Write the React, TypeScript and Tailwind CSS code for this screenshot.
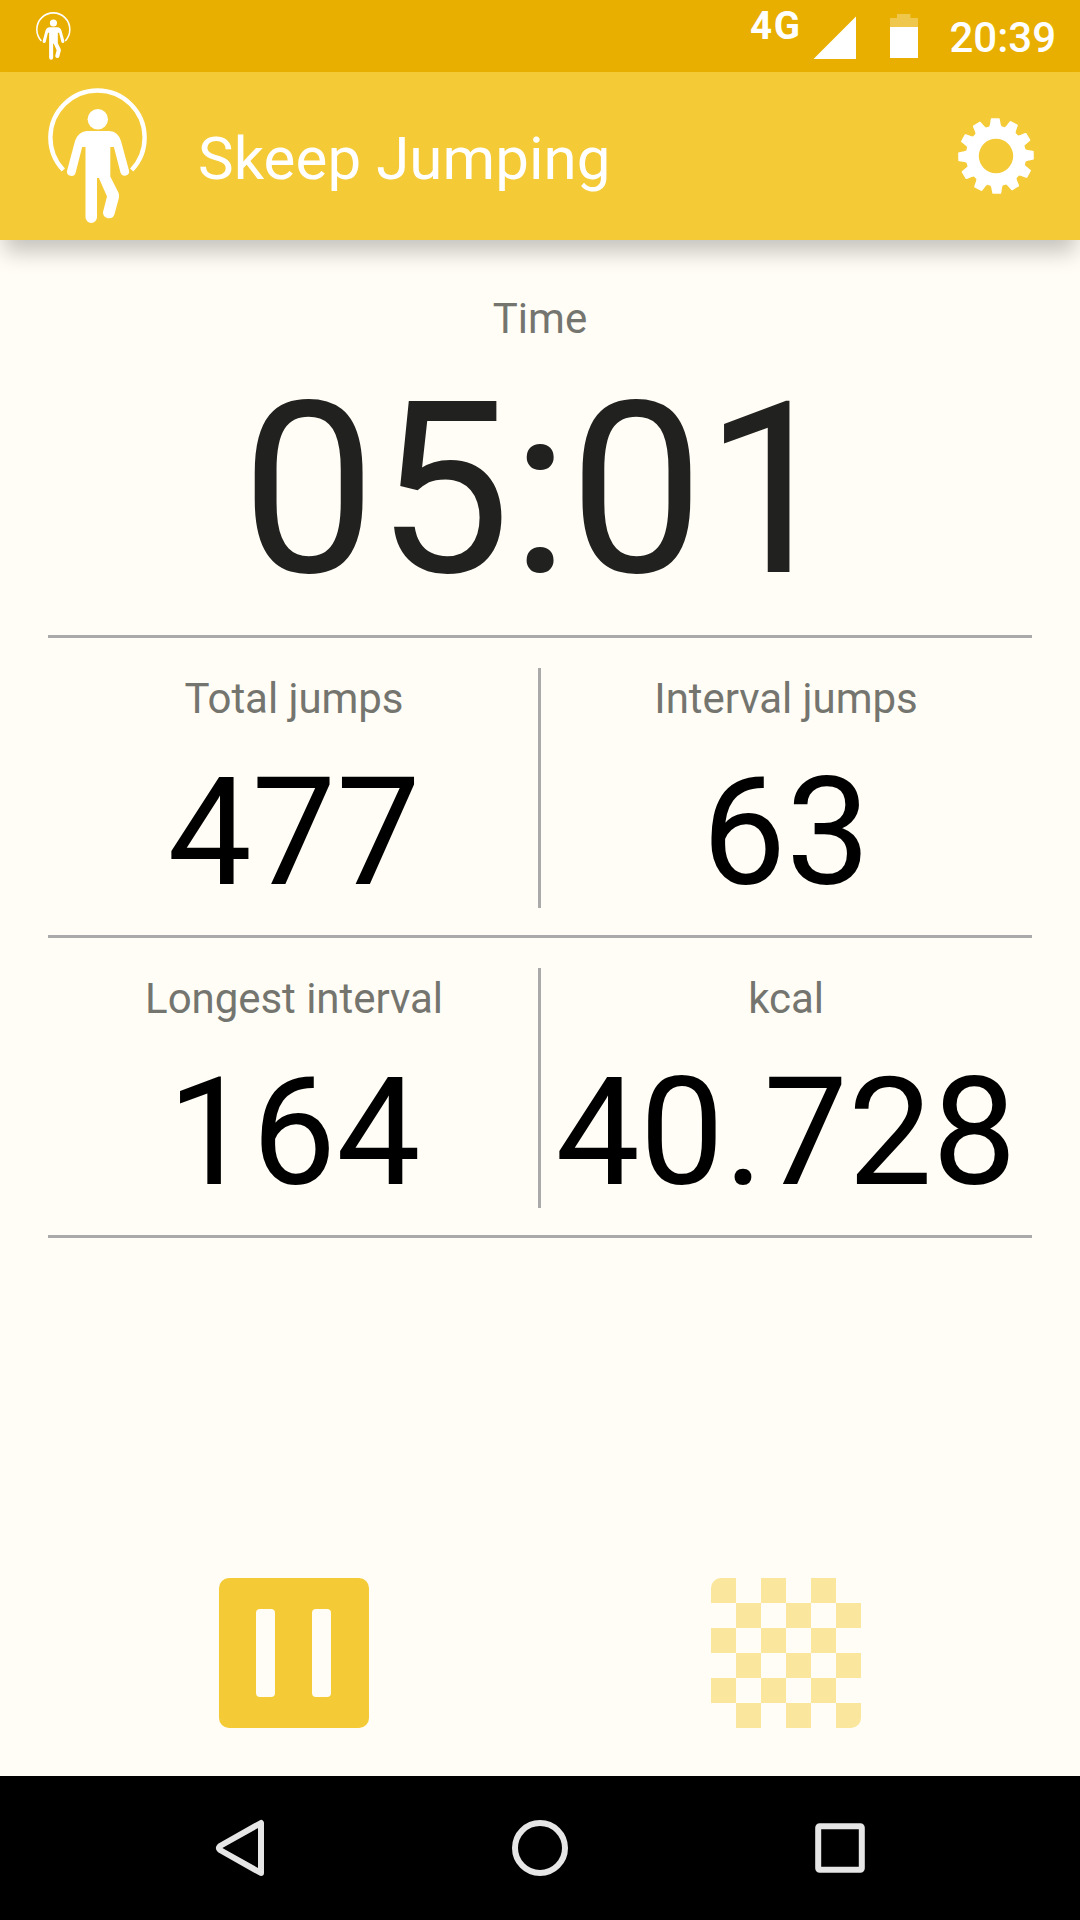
import React from "react";

function JumperIcon({ className }: { className: string }) {
  return (
    <svg className={className} viewBox="48 88 100 136" preserveAspectRatio="none" fill="#fff">
      <path
        d="M63.3 170 A47.1 47.1 0 1 1 131.7 170"
        fill="none"
        stroke="#fff"
        strokeWidth="4.4"
      />
      <circle cx="97.8" cy="119.2" r="10.2" />
      <path d="M86.5 131 H109.5 Q118 131.5 121 141 L129 170.5 A4.4 4.4 0 0 1 120.6 173 L113.9 147 H110.3 V176.5 L118.4 192.5 Q119.6 195 118.9 198 L114.4 214.5 A5.9 5.9 0 0 1 103 212 L107 196.5 L98.9 178 H97 V217.3 A5.7 5.7 0 0 1 85.5 217.3 V147 H82.2 L75.6 172.7 A4.4 4.4 0 0 1 67 171 L75 141 Q78 132 86.5 131 Z" />
    </svg>
  );
}

const TEETH = 12;
const toothOutline = [
  [-11.6, 30.2],
  [-9.6, 32.2],
  [-7.1, 37],
  [-6.2, 38],
  [6.2, 38],
  [7.1, 37],
  [9.6, 32.2],
  [11.6, 30.2],
];
const gearPath =
  "M" +
  Array.from({ length: TEETH }, (_, i) =>
    toothOutline
      .map(([deg, r]) => {
        const a = ((i * 360) / TEETH - 1.2 + deg) * (Math.PI / 180);
        return `${(r * Math.sin(a)).toFixed(2)} ${(-r * Math.cos(a)).toFixed(2)}`;
      })
      .join("L"),
  ).join("L") +
  "ZM17.2 0A17.2 17.2 0 1 0 -17.2 0A17.2 17.2 0 1 0 17.2 0Z";

function GearIcon() {
  return (
    <svg className="h-[76px] w-[76px]" viewBox="-38 -38 76 76" fill="#fff">
      <path d={gearPath} fillRule="evenodd" />
    </svg>
  );
}

function StatusBar() {
  return (
    <div className="flex h-[72px] items-start bg-[#e8af00] text-white">
      <JumperIcon className="mt-3 ml-9 h-12 w-[35px]" />
      <span className="mt-1 ml-auto text-[38.5px] leading-[44px] font-bold tracking-[1.5px]">4G</span>
      <svg className="mt-4 ml-[12px] h-[43px] w-[43px]" viewBox="0 0 43 43" fill="#fff">
        <path d="M43 .5V43H.5Z" />
      </svg>
      <svg className="mt-[14px] ml-[34px] h-11 w-7" viewBox="0 0 28 44" fill="#fff">
        <path d="M7 0H20.500V4H28V13H0V4H7Z" opacity=".3" />
        <path d="M0 13H28V44H0Z" />
      </svg>
      <span className="mt-[13px] mr-[24px] ml-[31px] text-[42px] leading-[50px] font-medium">20:39</span>
    </div>
  );
}

function AppBar() {
  return (
    <header className="relative flex h-[168px] items-start bg-[#f4ca36] shadow-[0_16px_21px_-4px_rgba(0,0,0,0.23)]">
      <JumperIcon className="mt-4 ml-12 h-[136px] w-[100px]" />
      <h1 className="mt-[52px] ml-[50px] text-[60px] leading-[70px] tracking-[0.08px] text-white">Skeep Jumping</h1>
      <button className="mt-[46px] mr-[46px] ml-auto">
        <GearIcon />
      </button>
    </header>
  );
}

function Stat({ label, value }: { label: string; value: string }) {
  return (
    <div className="flex w-[492px] flex-col items-center">
      <span className="mt-[36px] text-[42px] leading-[50px] tracking-[-0.05px] text-[#757570]">{label}</span>
      <span className="mt-[21px] text-[150px] leading-[176px] text-black">{value}</span>
    </div>
  );
}

function StatRow({ children }: { children: [React.ReactNode, React.ReactNode] }) {
  return (
    <div className="flex h-[300px] border-b-[3px] border-[#aaaaaa]">
      {children[0]}
      <div className="mt-[30px] -mr-px -ml-[2px] h-[240px] w-[3px] shrink-0 bg-[#aaaaaa]" />
      {children[1]}
    </div>
  );
}

function PauseButton() {
  return (
    <button className="flex h-[150px] w-[150px] items-center justify-center gap-[37px] rounded-[10px] bg-[#f4ca36] pr-px">
      <span className="h-[88px] w-[19px] rounded-[4px] bg-[#fffdf5]" />
      <span className="h-[88px] w-[19px] rounded-[4px] bg-[#fffdf5]" />
    </button>
  );
}

function FinishButton() {
  return (
    <button className="grid h-[150px] w-[150px] grid-cols-6 overflow-hidden rounded-[10px]">
      {Array.from({ length: 36 }, (_, i) => (
        <span
          key={i}
          className={(Math.floor(i / 6) + i) % 2 === 0 ? "h-[25px] bg-[#fae69c]" : "h-[25px]"}
        />
      ))}
    </button>
  );
}

function NavBar() {
  return (
    <nav className="flex h-36 items-center justify-center gap-[200px] bg-black">
      <svg className="h-[100px] w-[100px]" viewBox="0 0 100 100" fill="none" stroke="#e6e6e6" strokeWidth="6">
        <path d="M71 25V75L30 52Q28 50 30 48Z" strokeLinejoin="round" />
      </svg>
      <svg className="h-[100px] w-[100px]" viewBox="0 0 100 100" fill="none" stroke="#e6e6e6" strokeWidth="6">
        <circle cx="50" cy="50" r="25" />
      </svg>
      <svg className="h-[100px] w-[100px]" viewBox="0 0 100 100" fill="none" stroke="#e6e6e6" strokeWidth="6">
        <rect x="28.2" y="28.2" width="43.600" height="43.600" rx="1.500" />
      </svg>
    </nav>
  );
}

export default function App() {
  return (
    <div className="flex h-[1920px] w-[1080px] flex-col bg-[#fffdf5] font-['Roboto',sans-serif]">
      <StatusBar />
      <AppBar />
      <main className="flex flex-1 flex-col px-12">
        <section className="flex h-[398px] flex-col items-center border-b-[3px] border-[#aaaaaa]">
          <span className="mt-[54px] text-[42px] leading-[50px] text-[#757570]">Time</span>
          <span className="mt-[6px] text-[240px] leading-[280px] text-[#21211f]">05:01</span>
        </section>
        <StatRow>
          <Stat label="Total jumps" value="477" />
          <Stat label="Interval jumps" value="63" />
        </StatRow>
        <StatRow>
          <Stat label="Longest interval" value="164" />
          <Stat label="kcal" value="40.728" />
        </StatRow>
        <div className="mt-auto mb-12 grid grid-cols-2 justify-items-center">
          <PauseButton />
          <FinishButton />
        </div>
      </main>
      <NavBar />
    </div>
  );
}
